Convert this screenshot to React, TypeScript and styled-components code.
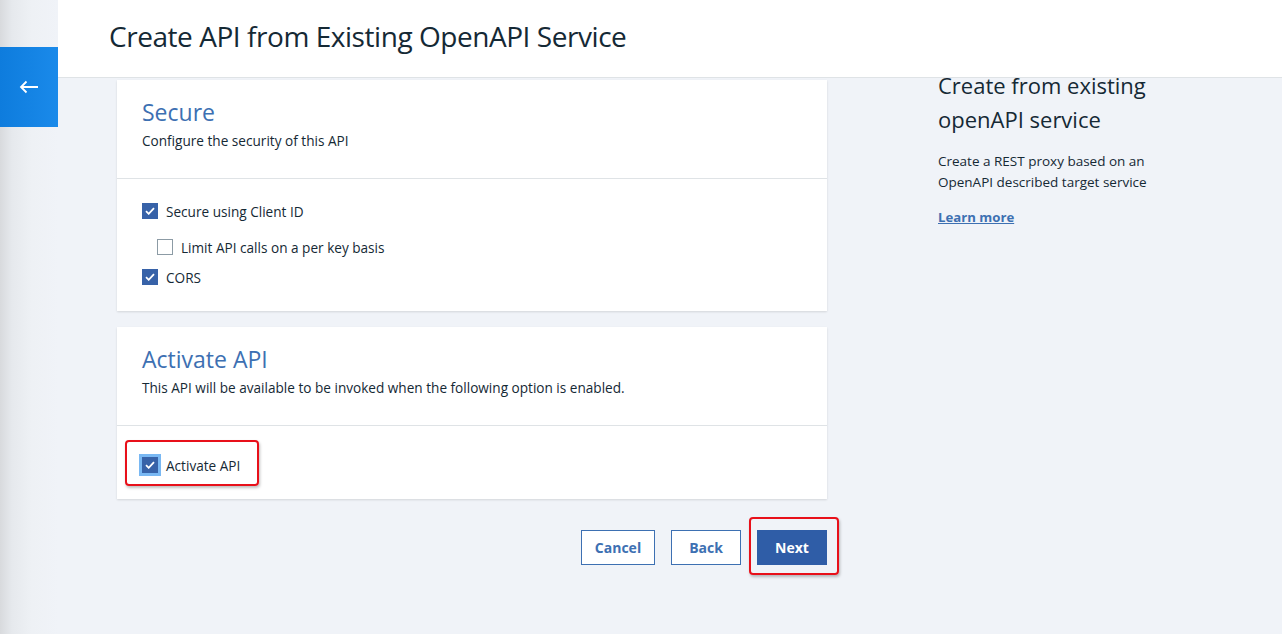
import React from 'react';
import styled, { createGlobalStyle } from 'styled-components';

const GlobalStyle = createGlobalStyle`
  html, body {
    margin: 0;
    padding: 0;
  }
  body {
    font-family: 'Open Sans', 'Noto Sans', sans-serif;
    color: #152935;
    background: #f0f3f8;
  }
  * {
    box-sizing: border-box;
  }
`;

const Page = styled.div`
  display: flex;
  width: 1282px;
  height: 634px;
  overflow: hidden;
  background: #f0f3f8;
`;

const Rail = styled.div`
  width: 58px;
  flex-shrink: 0;
  padding-top: 47px;
  background: linear-gradient(to right, #d8dadd 0, #e6e9ed 12px, #eef1f5 32px, #f0f3f8 58px);
`;

const BackButton = styled.button`
  display: flex;
  align-items: center;
  justify-content: center;
  width: 58px;
  height: 80px;
  border: 0;
  padding: 0;
  background: linear-gradient(to right, #0e7cdd, #1a8aea);
  cursor: pointer;
`;

const Main = styled.div`
  flex: 1;
  display: flex;
  flex-direction: column;
  min-width: 0;
`;

const Header = styled.header`
  position: relative;
  z-index: 1;
  height: 78px;
  display: flex;
  align-items: center;
  padding-left: 51px;
  background: #ffffff;
  border-bottom: 1px solid #dfe3e6;
`;

const Title = styled.h1`
  margin: 0 0 5px;
  font-size: 28px;
  font-weight: 400;
  color: #152935;
  letter-spacing: -0.45px;
`;

const Body = styled.div`
  display: flex;
  padding: 2px 0 0 59px;
`;

const Column = styled.div`
  width: 710px;
  display: flex;
  flex-direction: column;
  gap: 16px;
`;

const Card = styled.section`
  background: #ffffff;
  box-shadow: 0 1px 2px rgba(0, 0, 0, 0.12);
`;

const CardHead = styled.div`
  padding: 17px 25px 27px;
  border-bottom: 1px solid #dfe3e6;
`;

const CardTitle = styled.h2`
  margin: 0 0 4px;
  font-size: 23px;
  line-height: 30px;
  font-weight: 400;
  color: #3d70b2;
`;

const CardText = styled.p`
  margin: 0;
  font-size: 13.6px;
  line-height: 20px;
  color: #152935;
`;

const CardBody = styled.div<{ $pad: string }>`
  display: flex;
  flex-direction: column;
  align-items: flex-start;
  padding: ${(p) => p.$pad};
`;

const Row = styled.label<{ $indent?: boolean; $gap?: number }>`
  display: flex;
  align-items: center;
  gap: 8px;
  height: 20px;
  margin-top: ${(p) => p.$gap ?? 0}px;
  padding-left: ${(p) => (p.$indent ? 15 : 0)}px;
  font-size: 13.6px;
  color: #152935;
`;

const Box = styled.span<{ $checked?: boolean; $focus?: boolean }>`
  display: flex;
  align-items: center;
  justify-content: center;
  width: 16px;
  height: 16px;
  flex-shrink: 0;
  background: ${(p) => (p.$checked ? '#3762a8' : '#ffffff')};
  border: 1px solid ${(p) => (p.$checked ? '#3762a8' : '#8c9ba5')};
  box-shadow: ${(p) => (p.$focus ? '0 0 0 3px #79b8f3' : 'none')};
`;

const Highlight = styled.div<{ $m: string; $p: string }>`
  display: inline-flex;
  align-items: center;
  margin: ${(p) => p.$m};
  padding: ${(p) => p.$p};
  border: 2px solid #e8101a;
  border-radius: 4px;
  box-shadow: 1px 2px 3px rgba(0, 0, 0, 0.25);
`;

const Actions = styled.div`
  display: flex;
  justify-content: flex-end;
  align-items: flex-start;
  gap: 16px;
  margin-top: 15px;
`;

const Button = styled.button<{ $primary?: boolean; $w: number }>`
  width: ${(p) => p.$w}px;
  height: 35px;
  padding: 0;
  font-family: inherit;
  font-size: 14px;
  font-weight: 700;
  color: ${(p) => (p.$primary ? '#ffffff' : '#3d70b2')};
  background: ${(p) => (p.$primary ? '#2f5da7' : '#ffffff')};
  border: 1px solid ${(p) => (p.$primary ? '#2f5da7' : '#3d70b2')};
  cursor: pointer;
`;

const Aside = styled.aside`
  width: 240px;
  margin: -12px 0 0 111px;
`;

const AsideTitle = styled.h3`
  margin: 0 0 15px;
  font-size: 22px;
  line-height: 34px;
  font-weight: 400;
  color: #152935;
`;

const AsideText = styled.p`
  margin: 0 0 12px;
  font-size: 13.5px;
  line-height: 21px;
  color: #152935;
`;

const LearnMore = styled.a`
  font-size: 13.2px;
  line-height: 20px;
  font-weight: 700;
  color: #3d70b2;
  text-decoration: underline;
`;

const Check = () => (
  <svg width="10" height="8" viewBox="0 0 10 8" fill="none">
    <path d="M1 4.2 L3.7 6.8 L9 1.2" stroke="#ffffff" strokeWidth="1.8" />
  </svg>
);

const Option: React.FC<{ label: string; checked?: boolean; focus?: boolean; indent?: boolean; gap?: number }> = ({
  label,
  checked,
  focus,
  indent,
  gap,
}) => (
  <Row $indent={indent} $gap={gap}>
    <Box $checked={checked} $focus={focus}>{checked && <Check />}</Box>
    {label}
  </Row>
);

export default function App() {
  return (
    <>
      <GlobalStyle />
      <Page>
        <Rail>
          <BackButton aria-label="Back">
            <svg width="20" height="14" viewBox="0 0 20 14" fill="none">
              <path d="M19 7 H2 M7.5 1.5 L2 7 L7.5 12.5" stroke="#ffffff" strokeWidth="1.8" />
            </svg>
          </BackButton>
        </Rail>
        <Main>
          <Header>
            <Title>Create API from Existing OpenAPI Service</Title>
          </Header>
          <Body>
            <Column>
              <Card>
                <CardHead>
                  <CardTitle>Secure</CardTitle>
                  <CardText>Configure the security of this API</CardText>
                </CardHead>
                <CardBody $pad="22px 25px 24px">
                  <Option label="Secure using Client ID" checked />
                  <Option label="Limit API calls on a per key basis" indent gap={16} />
                  <Option label="CORS" checked gap={10} />
                </CardBody>
              </Card>
              <Card>
                <CardHead>
                  <CardTitle>Activate API</CardTitle>
                  <CardText>This API will be available to be invoked when the following option is enabled.</CardText>
                </CardHead>
                <CardBody $pad="14px 25px 13px">
                  <Highlight $m="0 0 0 -17px" $p="13px 17px 9px 15px">
                    <Option label="Activate API" checked focus />
                  </Highlight>
                </CardBody>
              </Card>
              <Actions>
                <Button $w={74}>Cancel</Button>
                <Button $w={70}>Back</Button>
                <Highlight $m="-13px -12px 0 -8px" $p="11px 10px 8px 6px">
                  <Button $w={70} $primary>
                    Next
                  </Button>
                </Highlight>
              </Actions>
            </Column>
            <Aside>
              <AsideTitle>
                Create from existing
                <br />
                openAPI service
              </AsideTitle>
              <AsideText>
                Create a REST proxy based on an
                <br />
                OpenAPI described target service
              </AsideText>
              <LearnMore href="#">Learn more</LearnMore>
            </Aside>
          </Body>
        </Main>
      </Page>
    </>
  );
}
